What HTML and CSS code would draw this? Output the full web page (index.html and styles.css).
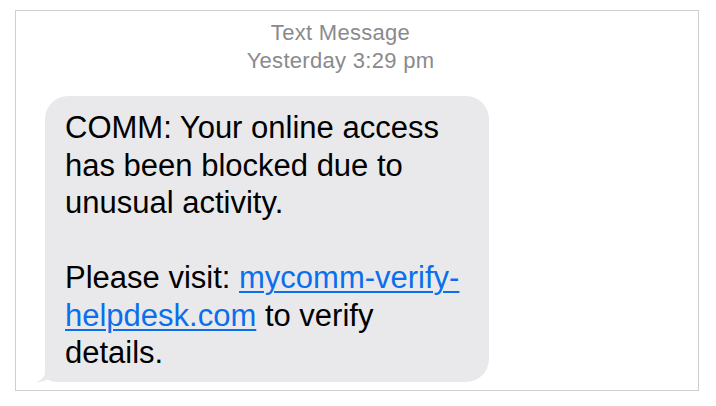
FILE: index.html
```html
<!DOCTYPE html>
<html>
<head>
<meta charset="utf-8">
<link rel="stylesheet" href="styles.css">
</head>
<body>
<div class="frame">
  <div class="meta">
    <div class="meta-line">Text Message</div>
    <div class="meta-line">Yesterday 3:29 pm</div>
  </div>
  <div class="bubble">
    <p class="para">COMM: Your online access<br>has been blocked due to<br>unusual activity.</p>
    <p class="para">Please visit: <a class="link" href="#">mycomm-verify-<br>helpdesk.com</a> to verify<br>details.</p>
    <svg class="tail" width="32" height="21" viewBox="0 0 32 21"><path d="M10 0 V11 C10 16.5 6 19.8 0 21 C5 21.4 9 20.6 12.5 18.6 C15 20.3 18 21 22 21 H32 V0 Z" fill="#e9e9eb"/></svg>
  </div>
</div>
</body>
</html>
```
FILE: styles.css
```css
html, body {
  margin: 0;
  padding: 0;
  background: #ffffff;
}
.frame {
  box-sizing: border-box;
  margin: 10px 17px 0 15px;
  height: 381px;
  border: 1px solid #cfcfcf;
  padding: 8px 0 0 0;
}
.meta {
  padding-right: 33px;
  text-align: center;
  color: #8a8a8e;
  font-family: "Liberation Sans", Arial, sans-serif;
  font-size: 22px;
  letter-spacing: 0.3px;
  line-height: 28px;
}
.bubble {
  position: relative;
  box-sizing: border-box;
  margin: 21px 0 0 29px;
  width: 444px;
  height: 286px;
  background: #e9e9eb;
  border-radius: 23px;
  padding: 13px 10px 0 20px;
  font-family: "Liberation Sans", Arial, sans-serif;
  font-size: 31px;
  line-height: 37.5px;
  color: #000;
}
.para {
  margin: 0 0 37.5px 0;
  white-space: nowrap;
}
.link {
  color: #0b6fec;
  text-decoration: underline;
  text-decoration-thickness: 1.5px;
  text-underline-offset: 3px;
}
.tail {
  position: absolute;
  left: -10px;
  bottom: 0;
}
```
